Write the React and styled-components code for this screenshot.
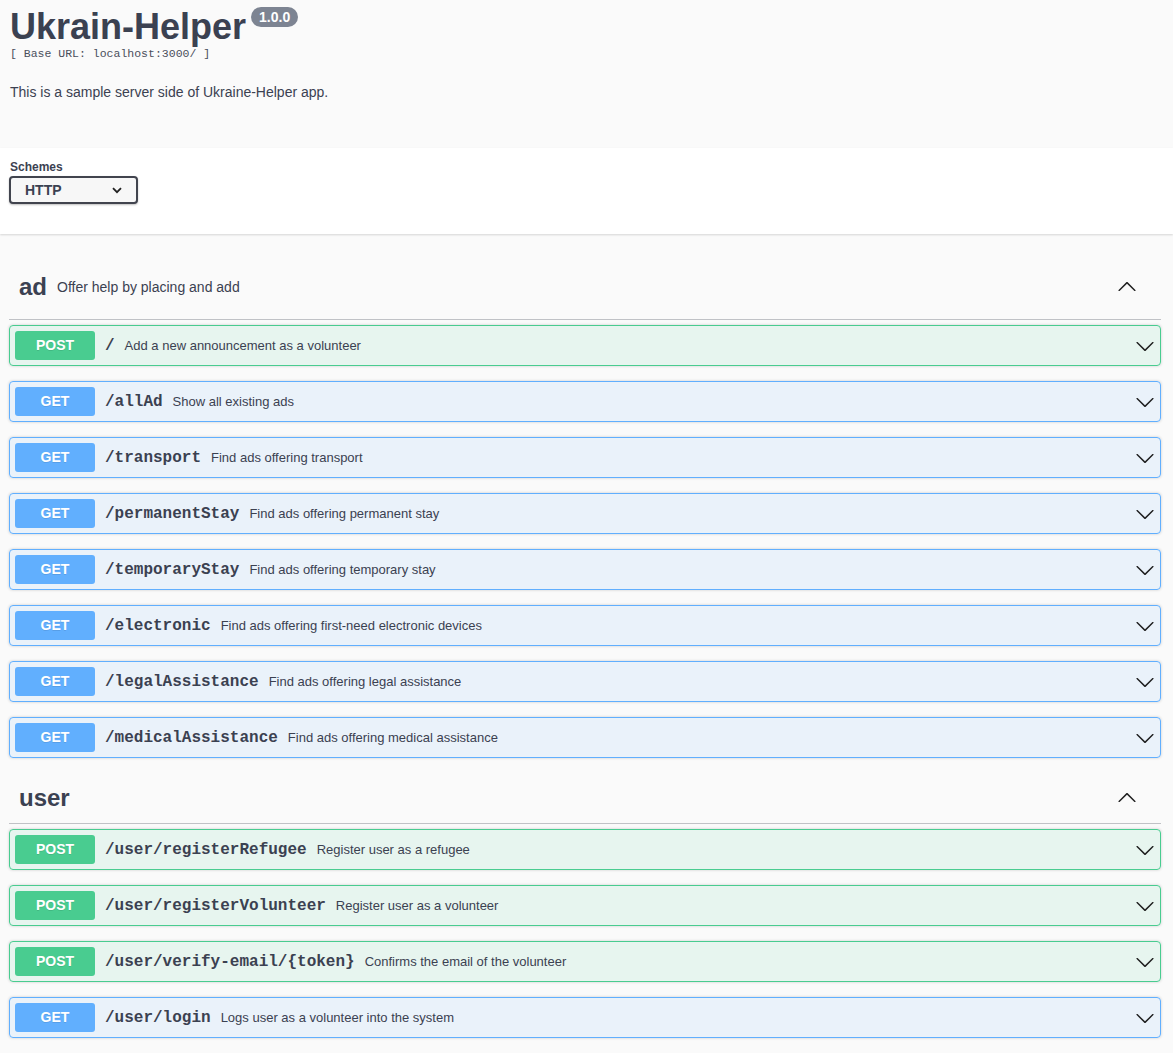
import React from "react";
import styled, { createGlobalStyle } from "styled-components";

const GlobalStyle = createGlobalStyle`
  html, body { margin: 0; padding: 0; background: #fafafa; }
  body { font-family: "Liberation Sans", Arial, sans-serif; color: #3b4151; }
  * { box-sizing: border-box; }
`;

const METHOD_COLORS = {
  POST: { main: "#49cc90", bg: "rgba(73,204,144,.1)" },
  GET: { main: "#61affe", bg: "rgba(97,175,254,.1)" },
};

const Info = styled.div`
  padding: 6px 12px 48px 10px;
`;

const TitleRow = styled.div`
  display: flex;
  align-items: flex-start;
`;

const Title = styled.h2`
  margin: 0;
  font-size: 36px;
  line-height: 41px;
  font-weight: 700;
  color: #3b4151;
`;

const Version = styled.span`
  margin: 1px 0 0 5px;
  padding: 2px 8px;
  border-radius: 57px;
  background: #7d8492;
  color: #fff;
  font-size: 14px;
  line-height: 16px;
  font-weight: 700;
`;

const BaseUrl = styled.div`
  font-family: "Liberation Mono", "Courier New", monospace;
  font-size: 11.5px;
  line-height: 14px;
  color: #4a4f5c;
`;

const Description = styled.p`
  margin: 23px 0 0;
  font-size: 14px;
  line-height: 16px;
  color: #3b4151;
`;

const SchemeContainer = styled.div`
  background: #fff;
  box-shadow: 0 1px 2px 0 rgba(0, 0, 0, 0.15);
  padding: 12px 12px 30px 9px;
  margin-bottom: 20px;
`;

const SchemeLabel = styled.div`
  font-size: 12px;
  font-weight: 700;
  line-height: 15px;
  padding-left: 1px;
  margin-bottom: 1px;
`;

const Select = styled.div`
  width: 129px;
  height: 28px;
  border: 2px solid #41444e;
  border-radius: 4px;
  background: #f7f7f7;
  box-shadow: 0 1px 2px 0 rgba(0, 0, 0, 0.25);
  display: flex;
  align-items: center;
  justify-content: space-between;
  padding: 0 14px 0 14px;
  font-size: 14px;
  font-weight: 700;
  color: #3b4151;
`;

const Wrapper = styled.div`
  padding: 0 12px 0 9px;
`;

const TagSection = styled.section`
  margin-bottom: 0;
`;

const TagHeader = styled.div`
  display: flex;
  align-items: center;
  height: ${(p) => (p.$tall ? "66px" : "51px")};
  padding: 0 24px 0 10px;
  border-bottom: 1px solid rgba(59, 65, 81, 0.3);
  margin-bottom: 5px;
`;

const TagName = styled.span`
  font-size: 24px;
  font-weight: 700;
  color: #3b4151;
`;

const TagDesc = styled.small`
  flex: 1;
  padding: 0 10px;
  font-size: 14px;
  color: #3b4151;
`;

const Spacer = styled.div`
  flex: 1;
`;

const Op = styled.div`
  display: flex;
  align-items: center;
  height: 41px;
  padding: 0 5px;
  margin-bottom: 15px;
  border: 1px solid ${(p) => METHOD_COLORS[p.$method].main};
  background: ${(p) => METHOD_COLORS[p.$method].bg};
  border-radius: 4px;
  box-shadow: 0 0 3px rgba(0, 0, 0, 0.19);
`;

const Method = styled.span`
  min-width: 80px;
  padding: 6px 0;
  text-align: center;
  border-radius: 3px;
  background: ${(p) => METHOD_COLORS[p.$method].main};
  color: #fff;
  font-size: 14px;
  line-height: 17px;
  font-weight: 700;
  text-shadow: 0 1px 0 rgba(0, 0, 0, 0.1);
`;

const Path = styled.span`
  padding: 0 10px;
  font-family: "Liberation Mono", "Courier New", monospace;
  font-size: 16px;
  font-weight: 700;
  color: #3b4151;
`;

const OpDesc = styled.span`
  flex: 1;
  font-size: 13px;
  color: #3b4151;
`;

const ArrowSvg = styled.svg`
  width: 20px;
  height: 20px;
  flex: none;
  fill: #1f1f1f;
  transform: ${(p) => (p.$up ? "rotate(180deg)" : "none")};
`;

const Arrow = ({ up }) => (
  <ArrowSvg $up={up} viewBox="0 0 20 20" aria-hidden="true">
    <path d="M17.418 6.109c.272-.268.709-.268.979 0s.271.701 0 .969l-7.908 7.83c-.27.268-.707.268-.979 0l-7.908-7.830c-.27-.268-.27-.701 0-.969.271-.268.709-.268.979 0L10 13.25l7.418-7.141z" />
  </ArrowSvg>
);

const tags = [
  {
    name: "ad",
    desc: "Offer help by placing and add",
    ops: [
      ["POST", "/", "Add a new announcement as a volunteer"],
      ["GET", "/allAd", "Show all existing ads"],
      ["GET", "/transport", "Find ads offering transport"],
      ["GET", "/permanentStay", "Find ads offering permanent stay"],
      ["GET", "/temporaryStay", "Find ads offering temporary stay"],
      ["GET", "/electronic", "Find ads offering first-need electronic devices"],
      ["GET", "/legalAssistance", "Find ads offering legal assistance"],
      ["GET", "/medicalAssistance", "Find ads offering medical assistance"],
    ],
  },
  {
    name: "user",
    desc: null,
    ops: [
      ["POST", "/user/registerRefugee", "Register user as a refugee"],
      ["POST", "/user/registerVolunteer", "Register user as a volunteer"],
      ["POST", "/user/verify-email/{token}", "Confirms the email of the volunteer"],
      ["GET", "/user/login", "Logs user as a volunteer into the system"],
    ],
  },
];

export default function App() {
  return (
    <>
      <GlobalStyle />
      <Info>
        <TitleRow>
          <Title>Ukrain-Helper</Title>
          <Version>1.0.0</Version>
        </TitleRow>
        <BaseUrl>[ Base URL: localhost:3000/ ]</BaseUrl>
        <Description>This is a sample server side of Ukraine-Helper app.</Description>
      </Info>
      <SchemeContainer>
        <SchemeLabel>Schemes</SchemeLabel>
        <Select>
          <span>HTTP</span>
          <svg width="10" height="7" viewBox="0 0 10 7" aria-hidden="true">
            <polyline points="1,1.2 5,5.2 9,1.2" fill="none" stroke="#222" strokeWidth="1.8" />
          </svg>
        </Select>
      </SchemeContainer>
      <Wrapper>
        {tags.map((tag) => (
          <TagSection key={tag.name}>
            <TagHeader $tall={!!tag.desc}>
              <TagName>{tag.name}</TagName>
              {tag.desc ? <TagDesc>{tag.desc}</TagDesc> : <Spacer />}
              <Arrow up />
            </TagHeader>
            {tag.ops.map(([m, p, d]) => (
              <Op key={p} $method={m}>
                <Method $method={m}>{m}</Method>
                <Path>{p}</Path>
                <OpDesc>{d}</OpDesc>
                <Arrow />
              </Op>
            ))}
          </TagSection>
        ))}
      </Wrapper>
    </>
  );
}
